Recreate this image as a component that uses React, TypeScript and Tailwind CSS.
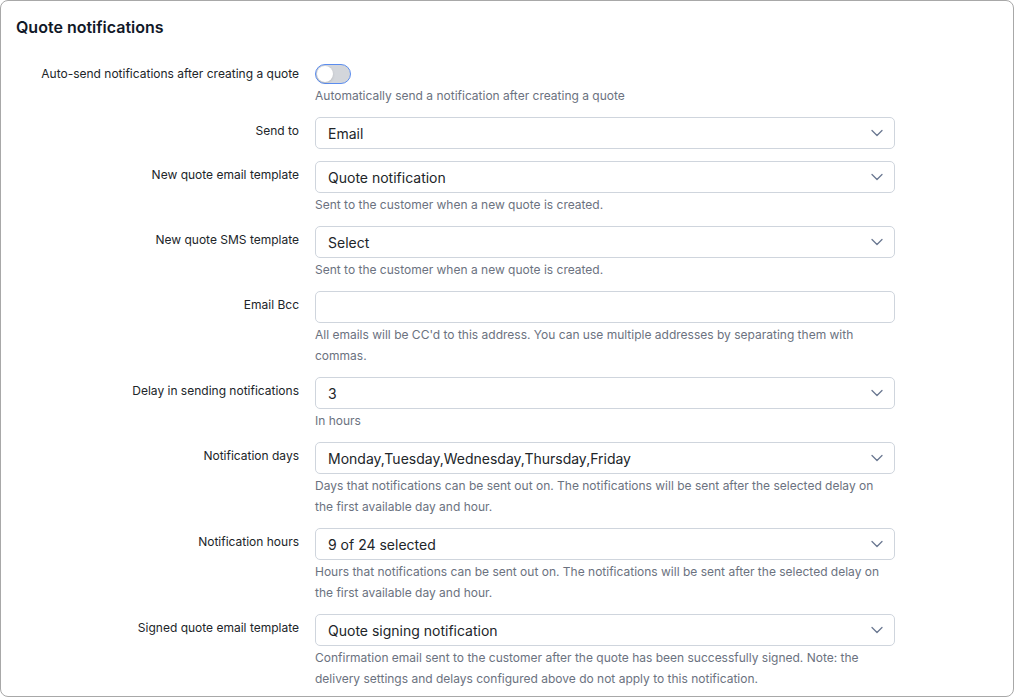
const font = { fontFamily: "Inter, 'Noto Sans', sans-serif" };

function Chevron() {
  return (
    <svg width="14" height="14" viewBox="0 0 14 14" fill="none" className="shrink-0">
      <path d="M2 4.5l5 5 5-5" stroke="#6b7892" strokeWidth="1.3" strokeLinecap="round" strokeLinejoin="round" />
    </svg>
  );
}

function Row({ label, help, children }: { label: string; help?: React.ReactNode; children: React.ReactNode }) {
  return (
    <div className={help ? "mb-[11px] flex" : "mb-3 flex"}>
      <div className="w-[283px] shrink-0 pt-1 text-right text-[12px] leading-5 text-[#212529]">{label}</div>
      <div className="ml-4 w-[580px]">
        {children}
        {help && <p className="mt-px pr-3 text-[12px] leading-[21px] text-[#6b7280]">{help}</p>}
      </div>
    </div>
  );
}

function Select({ value }: { value: string }) {
  return (
    <div className="flex h-8 items-center justify-between rounded-[5px] border border-[#cfd5dd] bg-white pl-3 pr-[10px]">
      <span className="text-[14px] text-[#212529]">{value}</span>
      <Chevron />
    </div>
  );
}

export default function App() {
  return (
    <div style={font} className="h-[697px] w-[1014px] bg-white">
      <div className="h-[697px] w-[1014px] rounded-lg border border-[#a8a8a8] px-[15px]">
        <h2 className="pt-4 pb-[22px] text-[16px] font-semibold leading-5 text-[#111827]">Quote notifications</h2>

        <div className="mb-[11px] flex">
          <div className="w-[283px] shrink-0 pt-[5px] text-right text-[12px] leading-5 text-[#212529]">
            Auto-send notifications after creating a quote
          </div>
          <div className="ml-4">
            <div className="pt-[5px] pb-[2px]">
              <div className="flex h-5 w-9 items-center rounded-full border-[1.5px] border-[#5b8def] bg-[#d3d6db] px-px">
                <div className="h-4 w-4 rounded-full bg-white shadow-sm" />
              </div>
            </div>
            <p className="text-[12px] leading-5 text-[#6b7280]">Automatically send a notification after creating a quote</p>
          </div>
        </div>

        <Row label="Send to">
          <Select value="Email" />
        </Row>
        <Row label="New quote email template" help="Sent to the customer when a new quote is created.">
          <Select value="Quote notification" />
        </Row>
        <Row label="New quote SMS template" help="Sent to the customer when a new quote is created.">
          <Select value="Select" />
        </Row>
        <Row
          label="Email Bcc"
          help="All emails will be CC'd to this address. You can use multiple addresses by separating them with commas."
        >
          <div className="h-8 rounded-[5px] border border-[#cfd5dd] bg-white" />
        </Row>
        <Row label="Delay in sending notifications" help="In hours">
          <Select value="3" />
        </Row>
        <Row
          label="Notification days"
          help="Days that notifications can be sent out on. The notifications will be sent after the selected delay on the first available day and hour."
        >
          <Select value="Monday,Tuesday,Wednesday,Thursday,Friday" />
        </Row>
        <Row
          label="Notification hours"
          help="Hours that notifications can be sent out on. The notifications will be sent after the selected delay on the first available day and hour."
        >
          <Select value="9 of 24 selected" />
        </Row>
        <Row
          label="Signed quote email template"
          help="Confirmation email sent to the customer after the quote has been successfully signed. Note: the delivery settings and delays configured above do not apply to this notification."
        >
          <Select value="Quote signing notification" />
        </Row>
      </div>
    </div>
  );
}
